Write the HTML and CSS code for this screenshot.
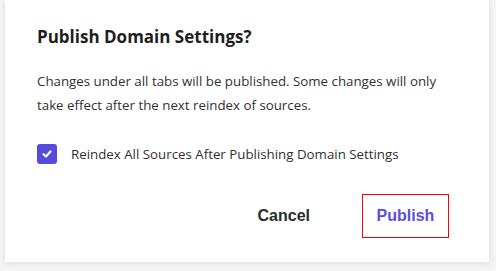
FILE: index.html
```html
<html>
<head>
  <title>publish</title>
  <link rel="stylesheet" href="styles.css">
</head>
<body>
<section class="dialog">
  <h1 class="title">Publish Domain Settings?</h1>
  <p class="message">Changes under all tabs will be published. Some changes will only take effect after the next reindex of sources.</p>
  <label class="option">
    <span class="box">
      <svg width="12" height="12" viewBox="0 0 12 12"><path d="M2.5 6.2 L5 8.5 L9.5 3.5" fill="none" stroke="#fff" stroke-width="2.2" stroke-linecap="round" stroke-linejoin="round"/></svg>
    </span>
    Reindex All Sources After Publishing Domain Settings
  </label>
  <div class="actions">
    <button class="btn cancel">Cancel</button>
    <button class="btn publish">Publish</button>
  </div>
</section>
</body>
</html>
```

FILE: styles.css
```css
body {
  margin: 0;
  background: #f4f4f4;
  font-family: "Open Sans", "Noto Sans", sans-serif;
  color: #323130;
}

.dialog {
  margin: 0 7px 0 5px;
  height: 262px;
  box-sizing: border-box;
  background: #fff;
  box-shadow: 0 1px 6px rgba(0, 0, 0, .1);
  padding: 24px 32px 0 32px;
}

.title {
  margin: 0;
  font-size: 17px;
  line-height: 26px;
  font-weight: 700;
  color: #201f1e;
}

.message {
  margin: 19px 0 0 0;
  font-size: 13.3px;
  line-height: 24px;
}

.option {
  display: flex;
  align-items: center;
  gap: 14px;
  margin-top: 27px;
  font-size: 13.3px;
}

.box {
  width: 20px;
  height: 20px;
  border-radius: 3px;
  background: #574bd9;
  display: flex;
  align-items: center;
  justify-content: center;
}

.actions {
  display: flex;
  justify-content: flex-end;
  align-items: center;
  gap: 51px;
  margin-top: 30px;
  padding-right: 8px;
}

.btn {
  font-family: "Liberation Sans", Arial, sans-serif;
  font-weight: 700;
  font-size: 16px;
  background: none;
  border: 1px solid transparent;
  height: 44px;
  padding: 0 13px;
}

.cancel {
  color: #2b2b2b;
  padding: 0;
}

.publish {
  color: #5b4fdb;
  border-color: #f00;
  width: 87px;
}
```
